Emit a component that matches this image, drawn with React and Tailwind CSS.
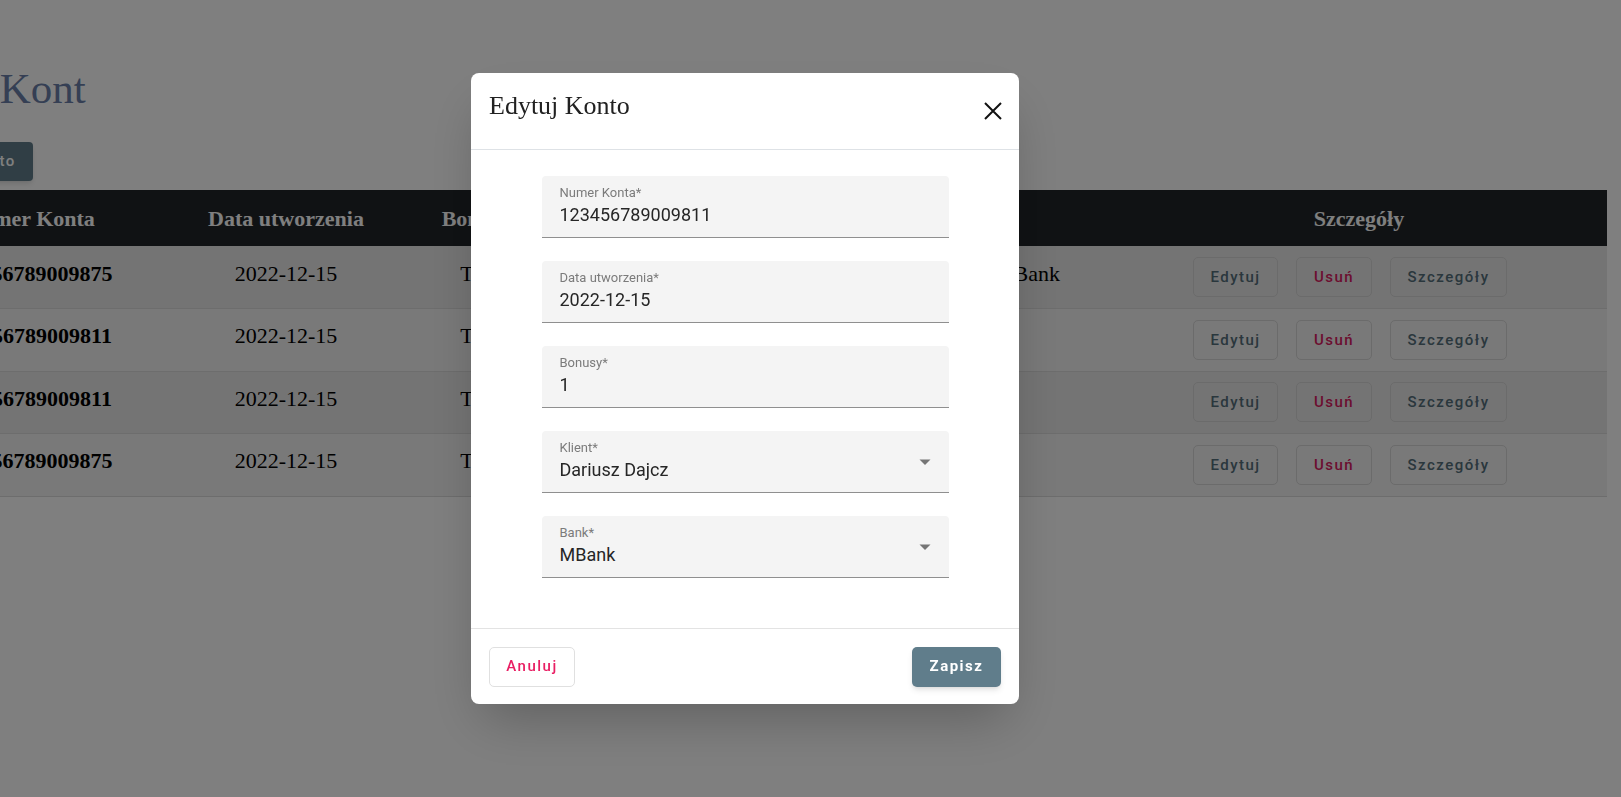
import React from "react";

const serif = "font-['Liberation_Serif','Times_New_Roman',serif]";
const roboto = "font-['Roboto','Liberation_Sans',sans-serif]";

const accounts = [
  { nr: "123456789009875", date: "2022-12-15", bonus: "Tak", client: "Dariusz Dajcz", bank: "Millennium Bank" },
  { nr: "123456789009811", date: "2022-12-15", bonus: "Tak", client: "Dariusz Dajcz", bank: "MBank" },
  { nr: "123456789009811", date: "2022-12-15", bonus: "Tak", client: "Dariusz Dajcz", bank: "MBank" },
  { nr: "123456789009875", date: "2022-12-15", bonus: "Tak", client: "Dariusz Dajcz", bank: "PKO" },
];

const fields = [
  { label: "Numer Konta*", value: "123456789009811" },
  { label: "Data utworzenia*", value: "2022-12-15" },
  { label: "Bonusy*", value: "1" },
  { label: "Klient*", value: "Dariusz Dajcz", select: true },
  { label: "Bank*", value: "MBank", select: true },
];

const Field = ({ label, value, select }) => (
  <div className="flex h-[62px] items-start justify-between rounded-t-[4px] border-b border-[#8f8f8f] bg-[#f4f4f4] px-[18px]">
    <div>
      <p className="pt-[9px] text-[13px] leading-[16px] text-[#7b7b7b]">{label}</p>
      <p className="mt-[2px] text-[18px] leading-[24px] text-[#262626]">{value}</p>
    </div>
    {select && (
      <svg className="mt-[27px]" width="12" height="8" viewBox="0 0 12 8">
        <path d="M0.5 1.5 L11.5 1.5 L6 7 Z" fill="#757575" />
      </svg>
    )}
  </div>
);

export default function App() {
  return (
    <div className="relative h-[797px] w-full overflow-hidden bg-white">
      {/* page behind the modal (scrolled right) */}
      <div className={`-ml-[97px] w-[1704px] ${serif}`}>
        <h1 className="pt-[67px] text-[43px] leading-none text-[#6a7fa8]">Lista Kont</h1>
        <button
          className={`-ml-[1px] mt-[32px] h-[39px] rounded-[4px] bg-[#607d8b] px-[17px] text-[15px] font-medium tracking-[1.5px] text-white shadow-md ${roboto}`}
        >
          Dodaj konto
        </button>
        <table className="mt-[9px] w-full table-fixed border-collapse text-[22px] text-black">
          <colgroup>
            <col className="w-[254px]" />
            <col className="w-[258px]" />
            <col className="w-[123px]" />
            <col className="w-[315px]" />
            <col className="w-[258px]" />
            <col className="w-[496px]" />
          </colgroup>
          <thead>
            <tr className="h-[56px] bg-[#212529] text-white">
              <th className="font-bold">Numer Konta</th>
              <th className="font-bold">Data utworzenia</th>
              <th className="font-bold">Bonusy</th>
              <th className="font-bold">Klient</th>
              <th className="font-bold">Bank</th>
              <th className="font-bold">Szczegóły</th>
            </tr>
          </thead>
          <tbody>
            {accounts.map((a, i) => (
              <tr
                key={i}
                className={`h-[62.5px] border-b border-[#dadada] ${i % 2 === 0 ? "bg-[#e9e9e9]" : "bg-[#f2f2f2]"}`}
              >
                <td className="pb-[8px] text-center font-bold">{a.nr}</td>
                <td className="pb-[8px] text-center">{a.date}</td>
                <td className="pb-[8px] text-center">{a.bonus}</td>
                <td className="pb-[8px] text-center">{a.client}</td>
                <td className="pb-[8px] text-center">{a.bank}</td>
                <td className={`text-center text-[15px] font-medium tracking-[1.5px] ${roboto}`}>
                  <button className="mr-[18px] h-[40px] w-[85px] rounded-[5px] border border-[#d6d6d6] text-[#546e7a]">
                    Edytuj
                  </button>
                  <button className="mr-[18px] h-[40px] w-[76px] rounded-[5px] border border-[#d6d6d6] text-[#d81b60]">
                    Usuń
                  </button>
                  <button className="mr-[18px] h-[40px] w-[117px] rounded-[5px] border border-[#d6d6d6] text-[#546e7a]">
                    Szczegóły
                  </button>
                </td>
              </tr>
            ))}
          </tbody>
        </table>
      </div>

      {/* modal */}
      <div className="fixed inset-0 bg-black/50">
        <div className="ml-[471px] mt-[73px] w-[548px] rounded-lg bg-white shadow-2xl">
          <div className="flex h-[77px] items-start justify-between border-b border-[#dee2e6] pl-[18px] pr-[17px]">
            <h5 className={`pt-[18px] text-[26px] leading-[30px] text-[#212121] ${serif}`}>Edytuj Konto</h5>
            <button className="mt-[29px]">
              <svg width="18" height="18" viewBox="0 0 18 18">
                <path d="M1 1 L17 17 M17 1 L1 17" stroke="#111" strokeWidth="2" />
              </svg>
            </button>
          </div>
          <div className={`mx-auto flex w-[407px] flex-col gap-[23px] pb-[50px] pt-[26px] ${roboto}`}>
            {fields.map((f) => (
              <Field key={f.label} {...f} />
            ))}
          </div>
          <div className={`flex h-[76px] items-center justify-between border-t border-[#e3e3e3] px-[18px] ${roboto}`}>
            <button className="h-[40px] w-[86px] rounded-[5px] border border-[#e0e0e0] bg-white text-[15px] font-medium tracking-[1.5px] text-[#e91e63]">
              Anuluj
            </button>
            <button className="h-[40px] w-[89px] rounded-[5px] bg-[#607d8b] text-[15px] font-bold tracking-[1.5px] text-white shadow-md">
              Zapisz
            </button>
          </div>
        </div>
      </div>
    </div>
  );
}
